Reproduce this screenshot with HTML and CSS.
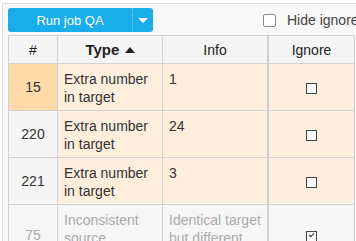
FILE: index.html
```html
<!DOCTYPE html>
<html>
<head>
    <title>Job QA</title>
    <link rel="stylesheet" href="styles.css">
</head>
<body>
    <div class="panel">
        <div class="toolbar">
            <div class="split-button">
                <button class="run">Run job QA</button>
                <button class="caret"><span class="arrow"></span></button>
            </div>
            <label class="hide-ignored">
                <span class="box"></span>
                Hide ignored
            </label>
        </div>

        <table class="qa-table">
            <thead>
                <tr>
                    <th class="col-num">#</th>
                    <th class="col-type">Type <span class="sort"></span></th>
                    <th class="col-info">Info</th>
                    <th class="col-ignore">Ignore</th>
                </tr>
            </thead>
            <tbody>
                <tr class="warn current">
                    <td class="num">15</td>
                    <td>Extra number in target</td>
                    <td>1</td>
                    <td class="ignore"><span class="check"></span></td>
                </tr>
                <tr class="warn">
                    <td class="num">220</td>
                    <td>Extra number in target</td>
                    <td>24</td>
                    <td class="ignore"><span class="check"></span></td>
                </tr>
                <tr class="warn">
                    <td class="num">221</td>
                    <td>Extra number in target</td>
                    <td>3</td>
                    <td class="ignore"><span class="check"></span></td>
                </tr>
                <tr class="ignored">
                    <td class="num">75</td>
                    <td>Inconsistent source</td>
                    <td>Identical target but different source</td>
                    <td class="ignore"><span class="check checked"></span></td>
                </tr>
            </tbody>
        </table>
    </div>
</body>
</html>
```

FILE: styles.css
```css
body {
    margin: 0;
    background: #fff;
    font-family: "Liberation Sans", Arial, sans-serif;
    color: #333;
    overflow: hidden;
}

.panel {
    margin: 3px 0 0 2px;
    border-top: 1px solid #ddd;
    border-left: 1px solid #ddd;
    background: #f8f8f8;
    padding: 4px 0 0 5px;
    height: 300px;
}

.toolbar {
    display: flex;
    align-items: center;
    height: 24px;
    margin-bottom: 3px;
}

.split-button {
    display: flex;
    flex-shrink: 0;
    width: 145px;
    height: 24px;
}

.split-button button {
    border: none;
    background: #19aeea;
    color: #fff;
    font-family: inherit;
    font-size: 13px;
    height: 24px;
    padding: 0;
}

.run {
    flex: 1;
    border-radius: 3px 0 0 3px;
    border-right: 1px dotted #7fd1f3 !important;
}

.caret {
    width: 20px;
    border-radius: 0 3px 3px 0;
    display: flex;
    align-items: center;
    justify-content: center;
}

.arrow {
    width: 0;
    height: 0;
    border-left: 5px solid transparent;
    border-right: 5px solid transparent;
    border-top: 5px solid #fff;
}

.hide-ignored {
    display: flex;
    flex-shrink: 0;
    align-items: center;
    gap: 11px;
    margin-left: 110px;
    font-size: 14px;
    color: #444;
    white-space: nowrap;
}

.hide-ignored .box {
    width: 11px;
    height: 11px;
    border: 1px solid #888;
    border-radius: 2px;
    background: #fff;
}

.qa-table {
    border-collapse: collapse;
    table-layout: fixed;
    width: 347px;
    font-size: 14px;
}

.qa-table th,
.qa-table td {
    border: 1px solid #d2d2d2;
}

.qa-table th {
    height: 27px;
    padding: 0;
    background: #f5f5f5;
    font-weight: normal;
    color: #222;
}

.col-num { width: 48px; }
.col-type { width: 104px; }
.col-info { width: 104px; }

.qa-table th.col-type {
    font-weight: bold;
    font-size: 15px;
}

.sort {
    display: inline-block;
    width: 0;
    height: 0;
    border-left: 5px solid transparent;
    border-right: 5px solid transparent;
    border-bottom: 6px solid #222;
    vertical-align: 2px;
    margin-left: 1px;
}

.qa-table th.col-info,
.qa-table td:nth-child(3) {
    border-right: 2px solid #cfcfcf;
}

.qa-table td {
    height: 40px;
    padding: 6px 6px 0;
    vertical-align: top;
    line-height: 18px;
    background: #fdeedd;
}

.qa-table td.num {
    text-align: center;
    vertical-align: middle;
    padding: 0;
    background: #f5f5f5;
}

.qa-table tr.current td.num {
    background: #fddaa8;
}

.qa-table td.ignore {
    text-align: center;
    vertical-align: middle;
    padding: 0;
}

.qa-table tr.ignored td {
    background: #f6f6f6;
    color: #aaa;
}

.check {
    display: inline-block;
    width: 9px;
    height: 9px;
    border: 1px solid #444;
    background: #fafafa;
    position: relative;
    vertical-align: middle;
}

.check.checked::after {
    content: "";
    position: absolute;
    left: 2px;
    top: 1px;
    width: 4px;
    height: 2px;
    border-left: 1px solid #333;
    border-bottom: 1px solid #333;
    transform: rotate(-45deg);
}
```
